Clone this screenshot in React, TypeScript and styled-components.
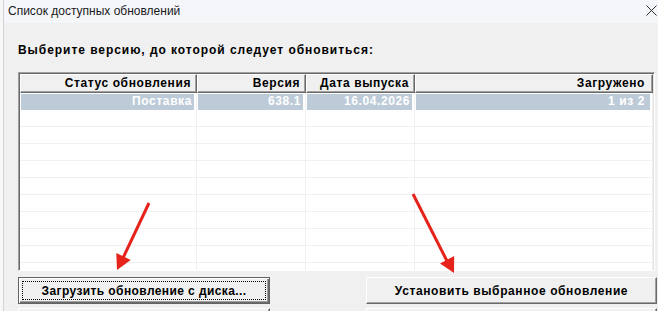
import React from 'react';
import styled, { createGlobalStyle } from 'styled-components';

const GlobalStyle = createGlobalStyle`
  html, body {
    margin: 0;
    padding: 0;
    overflow: hidden;
    background: #f0f0f0;
  }
`;

const columns = [
  { title: 'Статус обновления', width: '177px' },
  { title: 'Версия', width: '109px' },
  { title: 'Дата выпуска', width: '109px' },
  { title: 'Загружено', width: '1fr' },
];

const rows = [
  ['Поставка', '638.1', '16.04.2026', '1 из 2'],
  ...Array.from({ length: 10 }, () => ['', '', '', '']),
];

const grid = columns.map(c => c.width).join(' ');

export default function App() {
  return (
    <>
      <GlobalStyle />
      <Frame>
        <LeftStrip />
        <Window>
          <TitleBar>
            <TitleText>Список доступных обновлений</TitleText>
            <CloseIcon width="11" height="11" viewBox="0 0 11 11">
              <path d="M0.5 0.5 L10.5 10.5 M10.5 0.5 L0.5 10.5" stroke="#2b2b2b" strokeWidth="1" />
            </CloseIcon>
          </TitleBar>
          <Body>
            <Prompt>Выберите версию, до которой следует обновиться:</Prompt>
            <TableBox>
              <HeaderRow>
                {columns.map((c, j) => (
                  <HeaderCell key={c.title} last={j === columns.length - 1}>{c.title}</HeaderCell>
                ))}
              </HeaderRow>
              {rows.map((r, i) => (
                <Row key={i}>
                  {r.map((v, j) => (
                    <Cell key={j} selected={i === 0} last={j === r.length - 1}>{v}</Cell>
                  ))}
                </Row>
              ))}
            </TableBox>
            <Buttons>
              <Button width={252} isDefault>
                <FocusRect>Загрузить обновление с диска...</FocusRect>
              </Button>
              <Button width={291}>Установить выбранное обновление</Button>
            </Buttons>
            <Buttons>
              <Button width={252} />
              <Button width={291} />
            </Buttons>
          </Body>
        </Window>
        <Arrows width="658" height="311" viewBox="0 0 658 311">
          <line x1="149" y1="203" x2="123" y2="258" stroke="#e5231b" strokeWidth="3" />
          <polygon points="117,270 130.7,260 116.3,253" fill="#e5231b" />
          <line x1="413" y1="194" x2="447" y2="261" stroke="#e5231b" strokeWidth="3" />
          <polygon points="454,273 454.2,256 440,263.4" fill="#e5231b" />
        </Arrows>
      </Frame>
    </>
  );
}

const Frame = styled.div`
  position: relative;
  display: flex;
  width: 658px;
  height: 311px;
  overflow: hidden;
`;

const LeftStrip = styled.div`
  width: 3px;
  flex: none;
  background: #f7f7f7;
  border-right: 1px solid #d4d4d4;
`;

const Window = styled.div`
  flex: 1;
  display: flex;
  flex-direction: column;
  background: #f0f0f0;
`;

const TitleBar = styled.div`
  height: 23px;
  flex: none;
  display: flex;
  align-items: center;
  justify-content: space-between;
  padding: 0 1px 0 4px;
  background: #f5f6fa;
`;

const TitleText = styled.span`
  font-family: 'Liberation Sans', Arial, sans-serif;
  font-size: 12px;
  color: #1a1a1a;
  margin-top: -1px;
`;

const CloseIcon = styled.svg`
  margin-top: -3px;
`;

const Body = styled.div`
  display: flex;
  flex-direction: column;
  padding: 0 1px 0 14px;
  font-family: 'Liberation Sans', Arial, sans-serif;
  font-weight: 700;
  font-size: 12px;
  letter-spacing: 0.6px;
`;

const Prompt = styled.div`
  height: 15px;
  line-height: 15px;
  margin: 20px 0 14px;
  color: #000;
  letter-spacing: 0.95px;
`;

const TableBox = styled.div`
  height: 199px;
  margin-right: 2px;
  box-sizing: border-box;
  border-style: solid;
  border-width: 1px;
  border-color: #a0a0a0 #ffffff #ffffff #a0a0a0;
  box-shadow: inset 1px 1px 0 #696969, inset -1px -1px 0 #e3e3e3;
  background: #fff;
  padding: 1px 1px 0 1px;
  overflow: hidden;
`;

const HeaderRow = styled.div`
  display: grid;
  grid-template-columns: ${grid};
  height: 19px;
`;

const HeaderCell = styled.div<{ last?: boolean }>`
  box-sizing: border-box;
  background: #f0f0f0;
  border-style: solid;
  border-width: 1px;
  border-color: #ffffff #696969 #696969 #ffffff;
  box-shadow: inset -1px -1px 0 #a0a0a0;
  text-align: right;
  padding-right: ${p => (p.last ? '7px' : '5px')};
  line-height: 16px;
  color: #000;
  white-space: nowrap;
  overflow: hidden;
`;

const Row = styled.div`
  display: grid;
  grid-template-columns: ${grid};
  height: 17px;
`;

const Cell = styled.div<{ selected?: boolean; last?: boolean }>`
  box-sizing: border-box;
  border-right: 1px solid #f0f0f0;
  border-bottom: 1px solid #f0f0f0;
  background: ${p => (p.selected ? '#bdcbd9' : '#fff')};
  box-shadow: ${p => (p.selected ? 'inset 1px 1px 0 #fff, inset -2px 0 0 #fff' : 'none')};
  color: #fff;
  text-align: right;
  padding-right: ${p => (p.last ? '7px' : '4px')};
  line-height: 17px;
  white-space: nowrap;
`;

const Buttons = styled.div`
  display: flex;
  justify-content: space-between;
  margin-top: 6px;

  & + & {
    margin-top: 4px;
  }
`;

const Button = styled.div<{ width: number; isDefault?: boolean }>`
  width: ${p => p.width}px;
  height: 27px;
  flex: none;
  box-sizing: border-box;
  display: flex;
  align-items: center;
  justify-content: center;
  background: #f0f0f0;
  color: #000;
  border-style: solid;
  border-width: 1px;
  border-color: ${p => (p.isDefault ? '#646464' : '#ffffff #696969 #696969 #ffffff')};
  box-shadow: ${p =>
    p.isDefault
      ? 'inset 1px 1px 0 #fff, inset -1px -1px 0 #696969, inset -2px -2px 0 #a0a0a0'
      : 'inset -1px -1px 0 #a0a0a0'};
  padding: 3px;
  white-space: nowrap;
`;

const FocusRect = styled.div`
  flex: 1;
  align-self: stretch;
  display: flex;
  align-items: center;
  justify-content: center;
  border: 1px dotted #000;
  letter-spacing: 0.4px;
`;

const Arrows = styled.svg`
  position: absolute;
  left: 0;
  top: 0;
  pointer-events: none;
`;
